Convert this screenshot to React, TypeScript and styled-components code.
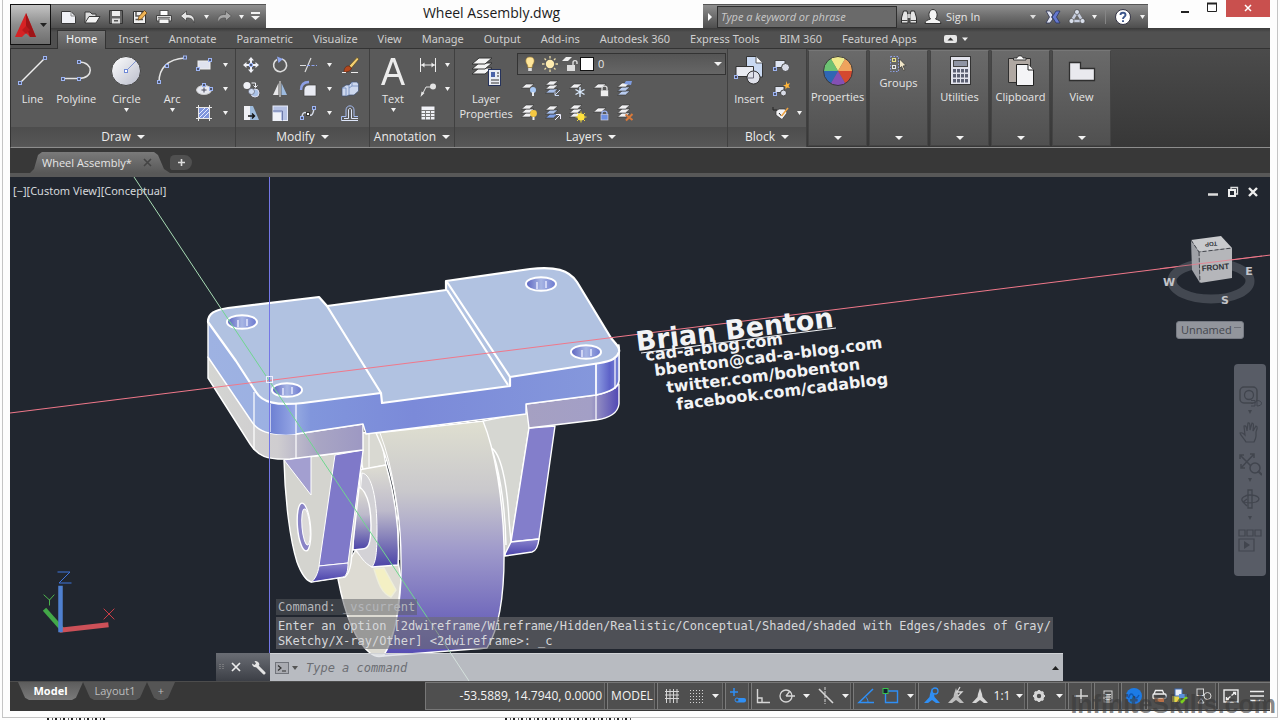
import React from 'react';
import styled, { createGlobalStyle, css } from 'styled-components';

const UI = '"Open Sans", "Noto Sans", "Liberation Sans", sans-serif';
const MONO = '"DejaVu Sans Mono", "Liberation Mono", monospace';

const Global = createGlobalStyle`
  *, *::before, *::after { box-sizing: border-box; }
  html, body { margin: 0; padding: 0; background: #fdfdfd; }
  body { font-family: ${UI}; font-size: 11px; line-height: 16px; color: #e6e6e6; overflow: hidden; }
  button, input, select { font: inherit; color: inherit; margin: 0; padding: 0; border: 0; background: none; border-radius: 0; }
  svg { display: block; flex: none; }
`;

/* ---------- shared pieces ---------- */

const Desktop = styled.div`
  display: flex;
  flex-direction: column;
  height: 100vh;
  padding: 0 2px;
`;

const Frame = styled.div`
  flex: 1;
  min-height: 0;
  display: flex;
  flex-direction: column;
  padding: 0 7px 6px 7px;
  border: 1px solid #c4c4c4;
  border-top: 0;
`;

/* edge of the window lying behind this one */
const Behind = styled.div`
  display: flex;
  height: 2px;
  padding: 0 45px;
  gap: 398px;
`;

const Fringe = styled.span<{ $w: number }>`
  width: ${p => p.$w}px;
  background: repeating-linear-gradient(90deg, #222 0 2px, transparent 2px 5px, #555 5px 6px, transparent 6px 8px);
`;

const IconButton = styled.button<{ $w?: number; $h?: number }>`
  display: inline-flex;
  align-items: center;
  justify-content: center;
  width: ${p => p.$w ?? 24}px;
  height: ${p => p.$h ?? 24}px;
  flex: none;
`;

const Arrow = ({ w = 6, c = '#f2f2f2' }: { w?: number; c?: string }) => (
  <svg width={w} height={4} viewBox="0 0 8 4" preserveAspectRatio="none" aria-hidden="true">
    <path d="M0 0H8L4 4Z" fill={c} />
  </svg>
);

const Glyph = ({ s = 20, children }: { s?: number; children: React.ReactNode }) => (
  <svg width={s} height={s} viewBox={`0 0 ${s} ${s}`} fill="none" aria-hidden="true">{children}</svg>
);

const Grip = ({ x, y }: { x: number; y: number }) => (
  <rect x={x - 1.5} y={y - 1.5} width="3" height="3" fill="#4b5470" stroke="#9db4f2" />
);

/* ---------- title bar ---------- */

const TitleBar = styled.header`
  position: relative;
  display: flex;
  height: 28px;
  padding-left: 41px;
  flex: none;
`;

const AppButton = styled.button`
  position: absolute;
  left: 0;
  top: 4px;
  z-index: 2;
  display: flex;
  align-items: center;
  justify-content: center;
  gap: 2px;
  width: 41px;
  height: 41px;
  border: 1px solid #111;
  background: linear-gradient(#c4c4c4, #8e8e8e 50%, #6e6e6e);
`;

const BarStrip = styled.div`
  display: flex;
  align-items: center;
  align-self: flex-end;
  height: 24px;
  border-top: 1px solid #555;
  background: linear-gradient(#8f8f8f, #707070 45%, #4e4e4e);
`;

const QuickBar = styled(BarStrip)`
  padding: 0 4px 0 5px;
`;

const Title = styled.h1`
  flex: 1;
  margin: 0;
  padding-left: 14px;
  font-size: 14px;
  font-weight: 400;
  line-height: 26px;
  text-align: center;
  white-space: nowrap;
  color: #1b1b1b;
`;

const SearchBox = styled.input`
  width: 180px;
  height: 22px;
  padding: 0 3px;
  border: 1px solid #2f2f2f;
  background: #6a6a6a;
  font-style: italic;
  &::placeholder { color: #c9c9c9; opacity: 1; }
`;

const SignIn = styled.button`
  display: flex;
  align-items: center;
  gap: 4px;
  width: 109px;
  height: 22px;
  padding-left: 3px;
`;

const ArrowSlot = styled.span`
  width: 10px;
`;

const Rule = styled.span`
  width: 1px;
  height: 14px;
  margin: 0 4px 0 5px;
  background: #858585;
`;

const WinButtons = styled.div`
  display: flex;
  margin-left: 24px;
  button { height: 17px; }
  svg { margin-top: -3px; }
`;

const CloseButton = styled(IconButton)`
  background: #c9504e;
`;

/* ---------- ribbon ---------- */

const TabRow = styled.nav`
  display: flex;
  align-items: flex-end;
  gap: 4px;
  height: 21px;
  flex: none;
  padding-left: 47px;
  background: linear-gradient(#3a3a3a, #505050 4px);
  border-bottom: 1px solid #333;
`;

const RibbonTab = styled.button<{ $on?: boolean }>`
  height: 18px;
  padding: 0 8px 1px;
  line-height: 16px;
  font-family: "Noto Sans", sans-serif;
  white-space: nowrap;
  color: #cfcfcf;
  ${p => p.$on && css`
    height: 19px;
    color: #f4f4f4;
    background: linear-gradient(#757575, #5c5c5c);
    border: 1px solid #333;
    border-bottom: 0;
    padding: 0 8px 3px;
    margin-bottom: -1px;
  `}
`;

const Ribbon = styled.section`
  display: flex;
  height: 99px;
  flex: none;
  background: linear-gradient(#4b4b4b, #373737);
  border-bottom: 1px solid #8d8d8d;
  border-left: 1px solid #333;
`;

const Panel = styled.div<{ $w: number }>`
  display: flex;
  flex-direction: column;
  width: ${p => p.$w}px;
  flex: none;
  background: #5a5a5a;
  border-right: 1px solid #404040;
`;

const PanelBody = styled.div`
  display: flex;
  flex: 1;
  min-height: 0;
  padding-top: 4px;
`;

const PanelTitle = styled.button`
  display: flex;
  align-items: center;
  justify-content: center;
  gap: 6px;
  height: 19px;
  margin-bottom: 1px;
  font-size: 12px;
  color: #ececec;
  background: linear-gradient(#4d4d4d, #565656);
`;

const BigTool = styled.button<{ $w: number }>`
  display: flex;
  flex-direction: column;
  align-items: center;
  width: ${p => p.$w}px;
  height: 72px;
  padding-top: 2px;
  line-height: 15px;
  white-space: nowrap;
  > svg:first-child { margin-bottom: 4px; }
  > svg:last-child:not(:first-child) { margin-top: 2px; }
`;

const ToolGrid = styled.div<{ $cols: string }>`
  display: grid;
  grid-template-columns: ${p => p.$cols};
  grid-auto-rows: 24px;
  align-content: start;
`;

const Split = styled.div`
  display: flex;
  align-items: center;
  gap: 5px;
`;

const LayerArea = styled.div`
  flex: 1;
`;

const LayerCombo = styled.div`
  display: flex;
  align-items: center;
  height: 22px;
  width: 209px;
  margin-bottom: 2px;
  padding: 0 3px 0 2px;
  border: 1px solid #333;
  background: linear-gradient(#555, #666);
`;

const PlainSelect = styled.select`
  flex: 1;
  appearance: none;
  min-width: 0;
  padding-left: 4px;
`;

const Swatch = styled.span`
  width: 14px;
  height: 14px;
  background: #fff;
  border: 1px solid #111;
`;

const SmallPanel = styled.button<{ $tight?: boolean }>`
  display: flex;
  flex-direction: column;
  align-items: center;
  width: 59px;
  height: 96px;
  margin: 1px 1px 0 1px;
  padding: 4px 0 5px;
  border: 1px solid #444;
  border-top-color: #777;
  background: linear-gradient(#6a6a6a, #505050);
  white-space: nowrap;
  > svg:last-child { margin-top: auto; }
  > span { margin-top: 2px; }
`;

/* ---------- file tabs ---------- */

const FileStrip = styled.div`
  display: flex;
  align-items: flex-end;
  height: 29px;
  flex: none;
  padding-left: 20px;
  background: #383838;
  border-bottom: 4px solid #585858;
`;

const FileTab = styled.button`
  display: flex;
  align-items: center;
  gap: 11px;
  width: 140px;
  height: 21px;
  padding-left: 12px;
  background: linear-gradient(#7a7a7a, #585858);
  clip-path: polygon(0 100%, 4px 17px, 8px 3px, 12px 0, 124px 0, 128px 3px, 134px 17px, 100% 100%);
  white-space: nowrap;
`;

const AddTab = styled.button`
  display: flex;
  align-items: center;
  justify-content: center;
  width: 22px;
  height: 15px;
  margin: 0 0 3px 0;
  border-radius: 5px 8px 8px 3px;
  background: #505050;
`;

/* ---------- drawing area ---------- */

const Canvas = styled.main`
  position: relative;
  flex: 1;
  min-height: 0;
  overflow: hidden;
  background: #21262f;
`;

const Scene = styled.svg`
  position: absolute;
  inset: 0;
  width: 100%;
  height: 100%;
`;

const ViewLabels = styled.div`
  position: absolute;
  left: 3px;
  top: 6px;
  display: flex;
  font-family: "Noto Sans", sans-serif;
  color: #d5d8dc;
`;

const DocButtons = styled.div`
  position: absolute;
  right: 7px;
  top: 7px;
  display: flex;
`;

const UcsSelect = styled.select`
  position: absolute;
  right: 26px;
  top: 144px;
  width: 68px;
  height: 18px;
  padding: 0 4px;
  appearance: none;
  border: 1px solid #777b84;
  border-radius: 3px;
  background: #92959c;
  color: #44474e;
`;

const UcsDash = styled.span`
  position: absolute;
  right: 29px;
  top: 150px;
  width: 7px;
  height: 1px;
  background: #6d7078;
`;

const NavBar = styled.div`
  position: absolute;
  right: 4px;
  top: 187px;
  width: 32px;
  height: 212px;
  padding: 18px 0 4px;
  display: flex;
  flex-direction: column;
  align-items: center;
  border-radius: 4px;
  background: #585c66;
`;

const CommandArea = styled.div`
  position: absolute;
  left: 206px;
  right: 207px;
  bottom: 0;
  font-family: ${MONO};
  font-size: 12px;
  line-height: 15px;
`;

const History = styled.div<{ $dim?: boolean }>`
  width: fit-content;
  margin: 0 0 2px 60px;
  padding: ${p => (p.$dim ? '1px 2px 0' : '2px 2px 0')};
  white-space: pre;
  color: ${p => (p.$dim ? '#b4b6ba' : '#d6d7da')};
  background: ${p => (p.$dim ? 'rgba(90, 92, 96, .5)' : 'rgba(108, 109, 113, .6)')};
`;

const CommandBar = styled.div`
  display: flex;
  height: 28px;
  margin-top: 4px;
`;

const CommandGrip = styled.div`
  display: flex;
  align-items: center;
  width: 54px;
  padding-left: 3px;
  background: linear-gradient(#6a6d74, #3c3f46);
`;

const CommandField = styled.div`
  flex: 1;
  display: flex;
  align-items: center;
  padding: 0 4px 0 5px;
  background: rgba(223, 225, 230, .8);
  border-top: 1px solid #d0d2d6;
`;

const CommandInput = styled.input`
  flex: 1;
  min-width: 0;
  height: 20px;
  padding-left: 5px;
  font-style: italic;
  color: #222;
  &::placeholder { color: #6c6e73; opacity: 1; }
`;

/* ---------- status bar ---------- */

const Bottom = styled.footer`
  display: flex;
  align-items: flex-start;
  height: 30px;
  flex: none;
  padding-left: 8px;
  background: #373737;
  border-top: 1px solid #4c4c4c;
`;

const LayoutTab = styled.button<{ $w: number; $on?: boolean }>`
  width: ${p => p.$w}px;
  height: 18px;
  line-height: 16px;
  color: ${p => (p.$on ? '#fff' : '#bdbdbd')};
  font-weight: ${p => (p.$on ? 700 : 400)};
  background: ${p => (p.$on ? 'linear-gradient(#5c5c5c, #7a7a7a)' : '#555')};
  clip-path: polygon(0 0, 100% 0, calc(100% - 7px) 88%, calc(100% - 11px) 100%, 11px 100%, 7px 88%);
`;

const Status = styled.div`
  display: flex;
  align-items: center;
  margin: 0 0 0 auto;
  height: 28px;
  font-size: 12px;
  color: #f3f3f3;
  background: #4f4f4f;
  border: 1px solid #777;
  border-right: 0;
`;

const Coords = styled.output`
  width: 181px;
  padding-right: 5px;
  text-align: right;
`;

const StatusGroup = styled.div`
  display: flex;
  align-items: center;
  height: 26px;
  border-left: 1px solid #7b7b7b;
  box-shadow: -2px 0 #444, -3px 0 #6d6d6d;
  > :first-child { margin-left: -1px; }
`;

const Watermark = styled.div`
  position: absolute;
  right: 4px;
  bottom: 2px;
  z-index: 5;
  font: 700 25px/28px "Liberation Sans", sans-serif;
  color: rgba(58, 58, 58, .62);
  pointer-events: none;
`;

/* ---------- icons ---------- */

const W = '#f0f1f6';
const Q = {
  file: <Glyph><path d="M3.500 4.500H13L17.500 9V16.500H3.500Z" fill={W} stroke="#3a3a3a" /><path d="M13 4.500V9H17.500" stroke="#888" /></Glyph>,
  open: <Glyph><path d="M3 16V5H8L10 7H14V9" fill="#ddd" stroke="#3a3a3a" /><path d="M3 16L7 9.500H18L14 16Z" fill="#f4f4f4" stroke="#3a3a3a" /></Glyph>,
  save: <Glyph><path d="M3.500 3.500H16.500V16.500H3.500Z" fill="#666" stroke="#333" /><rect x="6" y="4" width="8" height="5" fill="#eee" /><rect x="6" y="11.500" width="8" height="5" fill="#ddd" /><rect x="8" y="13" width="4" height="1.500" fill="#555" /></Glyph>,
  saveAs: <Glyph><path d="M3.500 4.500H15.500V16.500H3.500Z" fill="#f0f0f0" stroke="#333" /><path d="M6 5V9H12V5M5.500 12.500H13" stroke="#555" strokeWidth="1.500" /><path d="M8 13L9 9.500L14.500 3.500L17 6L11.500 12Z" fill="#f0b455" stroke="#6b4415" strokeWidth=".8" /></Glyph>,
  print: <Glyph><rect x="6" y="3.500" width="8" height="6" fill="#fff" stroke="#555" /><path d="M2.500 8.500H17.500V14H2.500Z" fill="#dcdcdc" stroke="#444" /><rect x="5" y="12" width="10" height="4.500" fill="#f5f5f5" stroke="#555" /><path d="M4 10.500H16" stroke="#777" /></Glyph>,
  undo: <Glyph><path d="M2.500 9L8.500 4V7.500C14 7 17.500 10 16 16C15 12 12.500 10.800 8.500 11V14Z" fill="#e4e4e4" stroke="#444" strokeWidth=".8" /></Glyph>,
  redo: <Glyph><path d="M17.500 9L11.500 4V7.500C6 7 2.500 10 4 16C5 12 7.500 10.800 11.500 11V14Z" fill="#a8a8a8" stroke="#555" strokeWidth=".8" /></Glyph>,
  more: <svg width="9" height="9" viewBox="0 0 9 9"><path d="M0 0H9V2H0ZM0 4H9L4.500 8Z" fill="#f4f4f4" /></svg>,
  binoc: <Glyph><path d="M3 9L4.500 4H8L9 8V16H2.500V11ZM17 9L15.500 4H12L11 8V16H17.500V11Z" fill="#e5e5e5" stroke="#2e2e2e" /><rect x="8.500" y="7" width="3" height="4" fill="#ccc" /><path d="M3 13.500H8.500M11.500 13.500H17" stroke="#444" /></Glyph>,
  user: <Glyph s={18}><path d="M1 15.500C1 12.500 4 12 6.500 11C3.500 8 5 1.500 9 1.500S14.500 8 11.500 11C14 12 17 12.500 17 15.500Z" fill="#f4f4f4" stroke="#333" /></Glyph>,
  exch: <Glyph><path d="M3 4H7L10 8L8.500 10L10 12L7 16H3L6.500 10Z" fill="#dfe3f2" stroke="#2a3050" strokeWidth=".8" /><path d="M17 4H13L10.500 8L9 10L10.500 12L13 16H17L13.500 10Z" fill="#6478d0" stroke="#2a3560" strokeWidth=".8" /></Glyph>,
  a360: <Glyph><path d="M10 5L4.500 14H15.500Z" stroke="#c6cdde" strokeWidth="2.600" /><circle cx="10" cy="5" r="2.500" fill="#d8deea" stroke="#333" strokeWidth=".6" /><circle cx="4.500" cy="14" r="2.500" fill="#d8deea" stroke="#333" strokeWidth=".6" /><circle cx="15.500" cy="14" r="2.500" fill="#d8deea" stroke="#333" strokeWidth=".6" /></Glyph>,
  help: <Glyph><circle cx="10" cy="10" r="7.500" fill="#fff" stroke="#334" /><path d="M7.500 8C7.500 5 12.500 5 12.500 8C12.500 9.800 10 9.800 10 12M10 13.200V15" stroke="#3c568c" strokeWidth="1.900" /></Glyph>,
};

const D = {
  line: <Glyph s={32}><path d="M4 28L29 3" stroke="#eee" strokeWidth="1.500" /><Grip x={4} y={28} /><Grip x={29} y={3} /></Glyph>,
  pline: <Glyph s={32}><path d="M3 23.500H19C34 23.500 34 7 19 7" stroke="#e4e4e4" strokeWidth="1.500" /><Grip x={3} y={24} /><Grip x={19} y={24} /><Grip x={19} y={7} /></Glyph>,
  circle: (
    <Glyph s={32}>
      <defs><linearGradient id="disc" x1="0" y1="0" x2="1" y2="1"><stop offset="0" stopColor="#fff" /><stop offset="1" stopColor="#b9bccb" /></linearGradient></defs>
      <circle cx="16" cy="16" r="14.500" fill="url(#disc)" stroke="#444" /><path d="M16 16L26 6" stroke="#7f93d0" /><rect x="14.500" y="14.500" width="3" height="3" fill="#fff" stroke="#6f8ad8" />
    </Glyph>
  ),
  arc: <Glyph s={32}><path d="M3 27C3 13 12 4 29 3" stroke="#e4e4e4" strokeWidth="1.500" /><Grip x={3} y={27} /><Grip x={11} y={11} /><Grip x={29} y={2.5} /></Glyph>,
  rect: <Glyph><rect x="4" y="6" width="12" height="8" fill="#dfe2ee" stroke="#eee" /><Grip x={4} y={14} /><Grip x={16} y={5} /></Glyph>,
  ellipse: <Glyph><ellipse cx="10" cy="11" rx="7.500" ry="4.500" fill="#e6e8f0" stroke="#ccc" /><Grip x={10} y={6} /><Grip x={17} y={10} /><path d="M10 8.500V13.500M7.500 11H12.500" stroke="#445" /></Glyph>,
  hatch: <Glyph><rect x="5" y="5" width="10" height="10" fill="#7f95dc" /><path d="M5 11L11 5M5 15L15 5M9 15L15 9" stroke="#e6ecff" strokeWidth="1" /><path d="M4.500 2V18M15.500 2V18M2 4.500H18M2 15.500H18" stroke="#e8e8e8" /></Glyph>,
  move: <Glyph><path d="M10 2L13 5.500H11V8H9V5.500H7ZM10 18L13 14.500H11V12H9V14.500H7ZM2 10L5.500 7V9H8V11H5.500V13ZM18 10L14.500 7V9H12V11H14.500V13Z" fill={W} /><Grip x={10} y={10} /></Glyph>,
  rotate: <Glyph><path d="M7 4.500A6.500 6.500 0 1 0 12 4" stroke="#dedede" strokeWidth="1.600" /><path d="M7 1.500L13 4L8.500 8Z" fill="#8ea6ee" /></Glyph>,
  trim: <Glyph><path d="M2 10.500H8M13 3L7 17" stroke="#dcdcdc" strokeWidth="1.200" /><path d="M9 10.500H19" stroke="#8fa4f0" strokeDasharray="3 1.500" /></Glyph>,
  brush: <Glyph><path d="M9 11L17 2.500L19 4L11.500 13Z" fill="#f3cf70" stroke="#5c471c" strokeWidth=".7" /><path d="M4 17C4 13 6 10.500 9 11L11.500 13C11 16 8 17 4 17Z" fill="#b3481e" stroke="#5c2410" strokeWidth=".6" /><path d="M2 17.500H6M11 17.500H18" stroke="#eee" /></Glyph>,
  copy: <Glyph><circle cx="6" cy="6.500" r="3.600" fill={W} /><circle cx="14" cy="14" r="4" fill="#a9c2e8" stroke="#dde" /><circle cx="10.500" cy="12.500" r="3" fill="#cfdcf2" stroke="#556" strokeWidth=".6" /><path d="M10.500 4H14.500V8M12.500 6.500L14.500 8.500L16.500 6.500" stroke={W} /></Glyph>,
  mirror: <Glyph><path d="M8.500 4V16H3Z" fill="#e8e8ea" /><path d="M11.500 4V16H17Z" fill="#9dbbe0" /><path d="M10 2V18" stroke="#eee" /></Glyph>,
  fillet: <Glyph><path d="M6 17V11C6 8 8 6 11 6H18V17Z" fill="#e8eaf2" stroke="#444" strokeWidth=".7" /><path d="M3 11C3 6 6 3 11 3" stroke="#8d9fe4" strokeWidth="2.400" /></Glyph>,
  erase: <Glyph><path d="M2 9L6 6H9L12 3H17L18.500 5V12L14 16H9L7 17H2Z" fill="#cdd8ee" stroke="#3f5274" strokeWidth=".7" /><path d="M9 6V16M9 9L12 7H18M12 7V3M2 9H6V17" stroke="#6f8bbd" strokeWidth=".8" /></Glyph>,
  stretch: <Glyph><path d="M3 3H9V17H3Z" fill={W} /><path d="M9 3H12L18 17H9Z" fill="#9dbbdc" /><path d="M7 13H13M11 10.500L13.500 13L11 15.500" stroke="#111" strokeWidth="1.400" /></Glyph>,
  scale: <Glyph><rect x="3" y="3" width="14.500" height="14.500" fill="#b6c2e4" stroke="#e8ecf8" /><path d="M3 8H12.500V17.500" stroke="#6d79a8" /><rect x="3" y="9.500" width="8" height="8" fill="#f2f3f8" /></Glyph>,
  array: <Glyph><path d="M4 15C4 8 8 9 10 11S15 14 16 5" stroke="#d6dbe8" strokeWidth="1.500" /><Grip x={4} y={15} /><rect x="8.500" y="9.500" width="3" height="3" fill="#fff" stroke="#333" /><Grip x={16} y={5} /></Glyph>,
  offset: <Glyph><path d="M1.500 17.500V13.500H6V7C6 1.500 14 1.500 14 7V13.500H18" stroke="#a6bcf0" /><path d="M1.500 17.500H18M4 15.500H8.500V7C8.500 5 11.500 5 11.500 7V15.500H18" stroke="#dde5f8" /></Glyph>,
  dim: <Glyph><path d="M2.500 3V17M17.500 3V17M3 10H17" stroke="#eee" /><path d="M6.500 7.500L3.500 10L6.500 12.500ZM13.500 7.500L16.500 10L13.500 12.500Z" fill="#eee" /></Glyph>,
  leader: <Glyph><path d="M4 16L8 8H13" stroke="#e4e4e4" /><path d="M2.500 18L3.500 12.500L6.500 14Z" fill="#e4e4e4" /><circle cx="15" cy="7.500" r="3" fill="#e4e4e4" /></Glyph>,
  table: <Glyph><rect x="3" y="3" width="14" height="14" fill={W} stroke="#555" /><path d="M3 7.500H17M3 10.500H17M3 13.500H17M7.500 7V17M12.500 7V17" stroke="#777" /></Glyph>,
  text: <svg width="32" height="32" viewBox="0 0 32 32" aria-hidden="true"><path d="M4 30L14 3H18L28 30H24.500L21.500 22H10.500L7.500 30ZM11.500 19H20.500L16 6.500Z" fill="#ececec" /></svg>,
  layerProps: (
    <Glyph s={32}>
      {[17, 12, 7].map(y => <path key={y} d={`M2 ${y + 2}L9 ${y - 4}H22L15 ${y + 2}Z`} fill="#f4f4f4" stroke="#333" />)}
      <rect x="18.500" y="14.500" width="12" height="16" fill="#e9ecf4" stroke="#26335c" /><rect x="21" y="17" width="4" height="5" fill="#4a62a8" /><path d="M27 18H29M27 21H29M21 25H29M21 28H29" stroke="#333" />
    </Glyph>
  ),
  insert: <Glyph s={32}><path d="M13.500 1.500H23L29.500 8V22H13.500Z" fill="#c9d9f2" stroke="#333" /><path d="M23 1.500V8H29.500" fill="#fff" stroke="#555" /><path d="M3 11.500H20.500V21.500H3Z" fill="#e9ebf2" stroke="#333" /><circle cx="20.500" cy="22.500" r="6.500" fill="#dfe1ea" stroke="#333" /><path d="M20.500 16V23H14" stroke="#667" /><rect x="1.500" y="20.500" width="3" height="3" fill="#445" stroke="#9db4f2" /></Glyph>,
  blockNew: <Glyph><path d="M4 5.500H14V12.500H4Z" fill="#dfe5f2" stroke="#444" /><circle cx="14.500" cy="12.500" r="4" fill="#d8dbe6" stroke="#444" /><Grip x={4} y={14} /></Glyph>,
  blockEdit: <Glyph><path d="M4 7.500H13V13.500H4Z" fill="#dfe5f2" stroke="#444" /><circle cx="12.500" cy="14" r="3" fill="#d8dbe6" stroke="#444" /><path d="M15 2L16.500 5L19 4L17.500 7L19 9L16 8.500L14.500 10.500V7.500L12 6.500L15 5.500Z" fill="#ffb53a" /><Grip x={4} y={15} /></Glyph>,
  blockAttr: <Glyph><path d="M5 8L8 6H14L16 10L11 16.500L5 12Z" fill="#f2f2f4" stroke="#333" strokeWidth=".7" /><path d="M2 4V7H6M8 10L10.500 13" stroke="#222" /><path d="M10.500 13L17 5" stroke="#eda240" strokeWidth="1.600" /></Glyph>,
  bulb: <Glyph><path d="M10 3C5 3 5 8 7.500 11L8 13.500H12L12.500 11C15 8 15 3 10 3Z" fill="#ffe69a" stroke="#a88436" strokeWidth=".6" /><rect x="8.200" y="14" width="3.600" height="3" fill="#ddd" /></Glyph>,
  sun: <Glyph><circle cx="10" cy="10" r="4.200" fill="#ffedb0" /><path d="M10 2V4.500M10 15.500V18M2 10H4.500M15.500 10H18M4.500 4.500L6 6M14 14L15.500 15.500M4.500 15.500L6 14M14 6L15.500 4.500" stroke="#e8d9a4" strokeWidth="1.300" /></Glyph>,
  unlock: <Glyph><path d="M2 7L6 3H12L8 7Z" fill="#eee" /><rect x="7" y="11" width="8" height="6" fill="#ddd" /><path d="M13 11V8.500C13 6 17 6 17 8.500V10" stroke="#ddd" strokeWidth="1.400" /></Glyph>,
};

const Sheet = ({ y, c = '#f0f0f2' }: { y: number; c?: string }) => <path d={`M2.500 ${y + 2}L7 ${y - 2}H15L10.500 ${y + 2}Z`} fill={c} stroke="#333" strokeWidth=".6" />;
const L = [
  <Glyph key="0"><Sheet y={7} /><circle cx="14" cy="11" r="3" fill="#a8c8f4" /><path d="M14 13V17" stroke="#e4e8f0" strokeWidth="2" /></Glyph>,
  <Glyph key="1"><Sheet y={12} c="#a8bfe8" /><Sheet y={8} /><Sheet y={4} /><path d="M17 11L12 16M12 12.500V16.500H16" stroke="#c8d6f0" /></Glyph>,
  <Glyph key="2"><Sheet y={7} /><path d="M13 8V18M8.500 10.500L17.500 15.500M17.500 10.500L8.500 15.500" stroke="#dcecff" strokeWidth="1.400" /></Glyph>,
  <Glyph key="3"><Sheet y={7} /><rect x="9.500" y="11" width="8" height="6.500" fill="#eee" stroke="#444" strokeWidth=".5" /><path d="M11 11V9C11 6.500 16 6.500 16 9V11" stroke="#ddd" strokeWidth="1.300" /></Glyph>,
  <Glyph key="4"><Sheet y={14} c="#b9ccf0" /><Sheet y={10} c="#b9ccf0" /><Sheet y={6} /><path d="M9 5L11 2H17L16 6" fill="#7f9ce0" /></Glyph>,
  <Glyph key="5"><Sheet y={12} /><Sheet y={8} /><Sheet y={4} /><circle cx="14.500" cy="10.500" r="3.400" fill="#f5c842" /><path d="M14.500 14V17" stroke="#eee" strokeWidth="2" /></Glyph>,
  <Glyph key="6"><Sheet y={13} c="#7fa0e6" /><Sheet y={9} c="#a8bfe8" /><Sheet y={5} /><path d="M12 17L17 12M13 11.500H17.500V16" stroke="#eef" /></Glyph>,
  <Glyph key="7"><Sheet y={12} /><Sheet y={8} /><Sheet y={4} /><circle cx="14" cy="14" r="3.600" fill="#ffe23c" /><path d="M14 8.500V19.500M8.500 14H19.500M10 10L18 18M18 10L10 18" stroke="#ffe23c" strokeWidth=".9" /></Glyph>,
  <Glyph key="8"><Sheet y={7} /><rect x="10" y="11.500" width="7" height="5.500" fill="#6d8fe0" stroke="#dde" strokeWidth=".6" /><path d="M11 11.500V10C11 7.500 16 7.500 16 10V11" stroke="#9db4f2" strokeWidth="1.300" /></Glyph>,
  <Glyph key="9"><Sheet y={12} /><Sheet y={8} /><Sheet y={4} /><path d="M10.500 11.500L17.500 17M17.500 11L11 17.500" stroke="#d8793a" strokeWidth="2" /></Glyph>,
];

const wheelColors = ['#efe98c', '#efa35c', '#d4492f', '#8450b4', '#2f67b4', '#6cc272'];
const ColorWheel = () => (
  <Glyph s={32}>
    {wheelColors.map((c, i) => {
      const p = (k: number) => {
        const a = ((k * 60 - 30) * Math.PI) / 180;
        return `${(16 + 14.5 * Math.sin(a)).toFixed(2)} ${(16 - 14.5 * Math.cos(a)).toFixed(2)}`;
      };
      return <path key={c} d={`M16 16L${p(i)}A14.500 14.500 0 0 1 ${p(i + 1)}Z`} fill={c} />;
    })}
    <circle cx="16" cy="16" r="14.500" stroke="#3a3a3a" />
  </Glyph>
);
const GroupIcon = () => <Glyph s={18}><rect x="2.500" y="3.500" width="3" height="3" stroke="#e8e08a" /><rect x="2.500" y="10.500" width="3" height="3" stroke="#e8e8e8" /><path d="M.5 1.500H8.500V16.500H.5Z" stroke="#8da0e8" strokeDasharray="1.500 1.500" /><path d="M9.500 4L16 10.500L13 11L15 15L13.500 15.500L11.500 11.500L9.500 13.500Z" fill="#f1e6c8" stroke="#333" strokeWidth=".7" /></Glyph>;
const CalcIcon = () => (
  <Glyph s={32}><rect x="6.500" y="1.500" width="20" height="28" fill="#e2e3ec" stroke="#333" /><rect x="9.500" y="5.500" width="14" height="6" fill="#8f94a3" stroke="#444" />
    {[14, 19, 24].map(y => [9, 13, 17, 21].map(x => <rect key={x + '-' + y} x={x} y={y} width="3" height="3.500" fill="#5c6072" />))}
  </Glyph>
);
const ClipIcon = () => <Glyph s={32}><path d="M3.500 3.500H25.500V27.500H3.500Z" fill="#b0a8a2" stroke="#2f2f2f" /><path d="M8.500 5V3H12C12 0 18 0 18 3H21V5Z" fill="#fff" stroke="#333" /><path d="M11.500 9.500H23L28.500 15V30.500H11.500Z" fill="#f4f4f6" stroke="#222" /><path d="M23 9.500V15H28.500" fill="#fff" stroke="#222" /></Glyph>;
const ViewIcon = () => <Glyph s={32}><path d="M3.500 7.500H14.500V13.500H28.500V25.500H3.500Z" fill="#e9e9ee" stroke="#2f2f2f" strokeWidth="1.300" /></Glyph>;

const B = '#2f8ff5';
const G = '#d6d6d6';
const Person = ({ c }: { c: string }) => <path d="M10 2L12 8L12.500 11L18 17H14L10 14L6 17H2L7.500 11L8 8Z" fill={c} />;
const S: Record<string, React.ReactNode> = {
  grid: <Glyph><path d="M4.500 3V17M8 3V17M11.500 3V17M15 3V17M3 5.500H17M3 9H17M3 12.500H17" stroke={G} /></Glyph>,
  snap: <Glyph><path d="M3 4.500H17M3 7.500H17M3 10.500H17M3 13.500H17M3 16.500H17" stroke={G} strokeDasharray="1 2" /></Glyph>,
  infer: <Glyph><path d="M6 2V10M2 6H10" stroke={B} strokeWidth="1.500" /><rect x="8" y="12" width="10" height="4.500" rx="2" fill={B} /><circle cx="9" cy="14" r="2" fill="#4f4f4f" stroke={B} /></Glyph>,
  ortho: <Glyph><path d="M4.500 3V16.500H17M4.500 12H9V16" stroke={G} strokeWidth="1.400" /></Glyph>,
  polar: <Glyph><circle cx="9" cy="10" r="6" stroke={G} strokeWidth="1.300" /><path d="M9 10H18M9 10L13 5" stroke={G} strokeWidth="1.300" /></Glyph>,
  iso: <Glyph><path d="M3 3L17 17" stroke={G} strokeWidth="1.600" /><path d="M9 1V18" stroke={G} strokeDasharray="3 1" /></Glyph>,
  angle: <Glyph><path d="M17 3L3 16.500H18" stroke={B} strokeWidth="1.500" /><path d="M9 10C11 12 12 14 12 16" stroke={B} /></Glyph>,
  osnap: <Glyph><path d="M5 5H16.500V16.500H4.500V6" stroke={B} strokeWidth="1.400" /><rect x="2" y="2.500" width="5" height="5" fill="#123" stroke="#39c24a" /></Glyph>,
  p1: <Glyph><Person c={B} /><circle cx="13" cy="5" r="3" fill="#4f4f4f" stroke={B} strokeWidth="1.300" /></Glyph>,
  p2: <Glyph><Person c="#bdbdbd" /><path d="M14 1L11 6H16L12 10" stroke="#d8d8d8" strokeWidth="1.300" /></Glyph>,
  p3: <Glyph><Person c={G} /></Glyph>,
  gear: <Glyph><circle cx="10" cy="10" r="3.700" stroke={G} strokeWidth="3.400" /><path d="M10 4V16M4 10H16M5.800 5.800L14.200 14.200M14.200 5.800L5.800 14.200" stroke={G} strokeWidth="2.200" /><circle cx="10" cy="10" r="2.200" fill="#4f4f4f" /></Glyph>,
  plus: <Glyph><path d="M10 3V17M3 10H17" stroke={G} strokeWidth="1.500" /></Glyph>,
  calc: <Glyph><rect x="6" y="5" width="8" height="11" stroke={G} /><path d="M7 8.500H13M7 11H13M7 13.500H13M9 8V15M11 8V15" stroke={G} /></Glyph>,
  ball: <Glyph><circle cx="10" cy="10" r="8" fill="#1c7be6" /><path d="M4.500 12C6 7 8 7 9.500 10S13 13 15 9" stroke="#0f58b4" strokeWidth="1.500" /></Glyph>,
  plot: <Glyph><path d="M5 8L6.500 4.500H13.500L15 8" stroke="#eee" strokeWidth="1.300" /><rect x="4" y="8" width="13" height="4.500" rx="1" fill="#4f4f4f" stroke="#eee" strokeWidth="1.300" /><rect x="6" y="12.500" width="9" height="3.500" fill="#b97048" /></Glyph>,
  share: <Glyph><rect x="2" y="10" width="7" height="6" fill="#e8d44c" /><rect x="5" y="3" width="7" height="7" fill="#e9eef8" stroke="#3f6cb8" /><path d="M9 8H17V12H9Z" fill="#5a8fdc" /><path d="M9 13L12 16L17 11" stroke="#7bd01e" strokeWidth="2.500" /></Glyph>,
  shapes: <Glyph><rect x="3" y="3" width="6.500" height="6.500" stroke={G} /><circle cx="13.500" cy="10" r="3.500" stroke={G} /><path d="M7 12.500L10 17H4Z" stroke={G} /></Glyph>,
  full: <Glyph><rect x="3" y="4" width="14" height="12" stroke="#eee" strokeWidth="1.400" /><path d="M10.500 9.500L14 6.500M12 6.500H14.500V9M9.500 10.500L6 13.500M8 13.500H5.500V11" stroke="#eee" strokeWidth="1.400" /></Glyph>,
  menu: <Glyph><path d="M3 5.500H17M3 10H17M3 14.500H17" stroke="#eee" strokeWidth="1.600" /></Glyph>,
};

/* ---------- scene ---------- */

const Hole = ({ x, y }: { x: number; y: number }) => (
  <g>
    <ellipse cx={x} cy={y} rx="15" ry="6.800" fill="url(#hole)" stroke="#fff" strokeWidth="2" />
    <path d={`M${x - 4} ${y - 2}V${y + 5}M${x + 5} ${y - 3}V${y + 4}`} stroke="#e8ecff" />
  </g>
);

const Model = () => (
  <g strokeLinejoin="round" strokeWidth="1.400" stroke="#fff">
    <path d="M483 421L528 412L529 428L511 543L504 556Z" fill="#d6d7d2" />
    <path d="M529 428L555 426L539 539L511 542Z" fill="#837ecb" />
    <path d="M511 542L539 539C538 547 536 551 532 552L505 556V545Z" fill="url(#foot)" />
    <path d="M486 432L491 448C500 452 507 480 509 520L511 542L504 556L499 480Z" fill="#d2d3d0" />
    <path d="M491 447C498 465 505 500 506 545" fill="none" />
    <path d="M357 548L338 579C344 610 354 640 370 653C375 657 381 657 385 655L396 625L401 580L398 560Z" fill="#dddbd3" />
    <path d="M374 569C378 582 381 593 391 597L396 590L384 568Z" fill="#f4f0c4" stroke="#eeeeda" />
    <path d="M357 433L380 432L386 465L363 470Z" fill="#d9d9d2" />
    <path d="M369 433V467" fill="none" strokeWidth="1" />
    <path d="M358 470L386 465C396 500 400 530 398 565L372 567L355 550Z" fill="url(#rim)" />
    <path d="M362 473C372 474 377 500 377 530C377 552 376 562 372 567C364 563 360 556 355 548Z" fill="#d3d2d6" strokeWidth="1" />
    <path d="M355 486C366 486 371 505 371 525C371 545 368 549 362 549L353 550Z" fill="url(#rim)" />
    <path d="M376 433L483 421C495 450 503 500 504 545C505 600 497 632 487 648L383 656C395 640 402 600 401 560C401 505 389 460 376 433Z" fill="url(#tread)" />
    <path d="M380 433C394 470 399 510 399 560" fill="none" strokeWidth="1" />
    <path d="M284 460C285 500 290 540 297 562C301 573 305 580 311 582L345 577C349 574 350 569 351 563L363 450Z" fill="#d4d4cf" />
    <path d="M284 460L311 495V456Z" fill="#a39fd0" strokeWidth="1" />
    <path d="M335 455L363 450L348 563L319 566Z" fill="#7f79c9" strokeWidth="1" />
    <path d="M319 566L348 563C348 570 347 576 343 577L311 582C315 580 318 573 319 566Z" fill="url(#foot)" strokeWidth="1" />
    <ellipse cx="304" cy="527" rx="6.500" ry="24" fill="#8a84c6" transform="rotate(-5 304 527)" />
    <ellipse cx="306" cy="527" rx="4" ry="18" fill="#dcdad8" strokeWidth="1" transform="rotate(-5 306 527)" />

    <path d="M208 357V378L250 444C258 456 266 460 290 459L363 450V424L296 434L256 422Z" fill="url(#lower)" />
    <path d="M526 404L529 428L596 420C610 418 618 412 619 404V384L596 395Z" fill="url(#lowerR)" />
    <path d="M208 320V357L252 422C258 431 268 436 296 434L363 424L366 434L526 414V404L596 395C610 392 619 388 619 380V347L510 360L300 380Z" fill="url(#side)" />
    <path d="M596 350V395C610 392 619 388 619 380V345Z" fill="url(#cornerR)" />
    <path d="M270 395V433C280 435 288 435 296 434V400Z" fill="url(#cornerL)" stroke="none" />
    <g strokeWidth="2.200">
      <path d="M208 322C208 313 215 310 228 308L319 297L327 306L446 290V281L530 269C555 266 569 270 577 282L611 338C617 345 620 348 619 352C617 358 612 361 600 363L510 377V386L382 403L381 393L303 403C275 406 262 402 256 392L236 361Z" fill="#b1c2e1" />
      <path d="M327 306L381 393M447 282L510 377M447 290L508 385" fill="none" />
    </g>
    <path d="M254 392V450M296 404V459M270 404V432M596 364V420M615 357V389" fill="none" opacity=".85" />
    <Hole x={242} y={322} /><Hole x={541} y={284} /><Hole x={287} y={390} /><Hole x={586} y={352} />
  </g>
);

const Stops = ({ id, dir = 'v', stops }: { id: string; dir?: 'v' | 'h'; stops: [number, string][] }) => (
  <linearGradient id={id} x1="0" y1="0" x2={dir === 'h' ? 1 : 0} y2={dir === 'v' ? 1 : 0}>
    {stops.map(([o, c]) => <stop key={o} offset={o} stopColor={c} />)}
  </linearGradient>
);

const SceneDrawing = () => (
  <Scene viewBox="10 177 1260 504" preserveAspectRatio="xMidYMid slice" role="img" aria-label="Wheel assembly model">
    <defs>
      <Stops id="tread" stops={[[0, '#dfdfd0'], [0.3, '#c9c8cc'], [0.55, '#9f9acb'], [1, '#564db3']]} />
      <Stops id="rim" stops={[[0, '#deddd2'], [0.45, '#bdbacb'], [1, '#4a43a8']]} />
      <Stops id="foot" stops={[[0, '#8a85cd'], [1, '#4a42ab']]} />
      <Stops id="hole" dir="h" stops={[[0, '#5c64c0'], [0.5, '#a8b6e4'], [1, '#6b78cf']]} />
      <Stops id="lower" dir="h" stops={[[0, '#d4d5d2'], [0.45, '#cfcdd0'], [0.7, '#a9a6c4'], [1, '#9d98c3']]} />
      <Stops id="lowerR" dir="h" stops={[[0, '#a5a0c2'], [0.7, '#a39fc6'], [1, '#5048b4']]} />
      <Stops id="side" dir="h" stops={[[0, '#9eb2e2'], [0.2, '#9bb0e2'], [0.25, '#8196dc'], [0.5, '#7b8ad9'], [1, '#8699dc']]} />
      <Stops id="cornerR" dir="h" stops={[[0, '#8f9fe2'], [0.6, '#5d62c8'], [1, '#7582d6']]} />
      <Stops id="cornerL" dir="h" stops={[[0, '#6c7fd2'], [1, '#98a9e6']]} />
    </defs>
    <Model />
    <path d="M-400 464.400L1700 201.200" stroke="#f0788a" strokeWidth="1" />
    <path d="M134 177L222 310M429 620L469 681" stroke="#a8dcb4" />
    <path d="M222 310L429 620" stroke="#6fd68f" />
    <path d="M269.500 177V681" stroke="#7477e6" />
    <rect x="266.500" y="376.500" width="6" height="6" fill="none" stroke="#eef" />

    <g fill="#f2f3f5" fontFamily='"DejaVu Sans", sans-serif' fontWeight="700">
      <text x="637" y="351" fontSize="27" transform="rotate(-7 637 351)">Brian Benton</text>
      <path d="M641 353L836 328" stroke="#f2f3f5" />
      <text x="646" y="361" fontSize="16" transform="rotate(-7 646 361)">cad-a-blog.com</text>
      <text x="655" y="376" fontSize="16" transform="rotate(-7 655 376)">bbenton@cad-a-blog.com</text>
      <text x="667" y="393" fontSize="16" transform="rotate(-7 667 393)">twitter.com/bobenton</text>
      <text x="677" y="410" fontSize="16" transform="rotate(-7 677 410)">facebook.com/cadablog</text>
    </g>

    <g strokeLinecap="square">
      <path d="M62 629L46 611" stroke="#43a848" strokeWidth="4.500" />
      <path d="M62 630L106 625" stroke="#cc5058" strokeWidth="5" />
      <path d="M60.500 630V588" stroke="#4f80d0" strokeWidth="4.500" />
      <path d="M58 572H70L59 583H71" stroke="#3f74dc" fill="none" />
      <path d="M44 595L49.500 600L54 595M49.500 600V605" stroke="#4db34d" fill="none" />
      <path d="M104 609L114 619M114 609L104 619" stroke="#cc3d46" />
    </g>
  </Scene>
);

const Cube = styled.svg`
  position: absolute;
  right: 8px;
  top: 53px;
`;

const ViewCube = () => (
  <Cube width="102" height="78" viewBox="1160 230 102 78" aria-label="View cube">
    <ellipse cx="1211" cy="281" rx="39" ry="18" fill="none" stroke="#434851" strokeWidth="9" />
    <path d="M1191 240L1221 236L1232 248L1199 252Z" fill="#c9cacd" />
    <path d="M1199 252L1232 248V278L1200 283Z" fill="#b5b6ba" />
    <path d="M1191 240L1199 252L1200 283L1192 270Z" fill="#9fa1a7" />
    <path d="M1191 240L1199 252L1232 248M1199 252L1200 283" stroke="#44474e" strokeDasharray="4 2" fill="none" />
    <path d="M1160 268.700L1262 256" stroke="#f0788a" opacity=".75" />
    <g fontFamily='"Liberation Sans", sans-serif' fontWeight="700" textAnchor="middle">
      <text x="1215.500" y="270" fontSize="8" fill="#303339" transform="rotate(-5 1215 268)">FRONT</text>
      <text x="1211" y="246" fontSize="6" fill="#303339" transform="rotate(175 1211 244)">TOP</text>
      <g fontSize="11" fill="#c3c4c9" fontFamily='"DejaVu Sans", sans-serif'>
        <text x="1169" y="286">W</text>
        <text x="1249" y="275">E</text>
        <text x="1225" y="304">S</text>
      </g>
    </g>
  </Cube>
);

const n = '#41454e';
const NavIcons = () => (
  <NavBar>
    <IconButton aria-label="Steering wheel" $h={28}><Glyph s={24}><rect x="2" y="3" width="17" height="16" rx="4" stroke={n} strokeWidth="1.500" /><circle cx="11" cy="11" r="4.500" stroke={n} strokeWidth="1.300" /><path d="M13 16.500H17V22H13M15 19.500H13M19 16.500V22C25 22 25 16.500 19 16.500Z" stroke={n} /></Glyph></IconButton>
    <Arrow w={4} c={n} />
    <IconButton aria-label="Pan" $h={36}><Glyph s={24}><path d="M8 22C6 18 3 16 2 13C4 12 6 14 7 15L6 6C8 5 8.500 7 9 11L10 3C12 2 12 5 12 10L14 3C16 3 15.500 5 15 11L18 6C20 6.500 19 9 18 12V16C18 18 17 20 16 22Z" stroke={n} strokeWidth="1.200" /></Glyph></IconButton>
    <IconButton aria-label="Zoom" $h={28}><Glyph s={24}><path d="M2 3L14 15M16 2L3 16M2 7V3H6M12 2H16V6M3 12V16H7" stroke={n} strokeWidth="1.500" /><circle cx="17" cy="16" r="5" fill="#585c66" stroke={n} strokeWidth="1.500" /><path d="M20 19L24 23" stroke={n} strokeWidth="2" /></Glyph></IconButton>
    <Arrow w={4} c={n} />
    <IconButton aria-label="Orbit" $h={34}><Glyph s={24}><path d="M10 3H14V21H10Z" stroke={n} strokeWidth="1.300" /><path d="M5 15C1 11 8 8 12 8C20 8 24 12 18 15C15 16 9 16 6 15M9 12L5 15L9 19" stroke={n} strokeWidth="1.300" /></Glyph></IconButton>
    <Arrow w={4} c={n} />
    <IconButton aria-label="Show motion" $h={40}><Glyph s={24}><path d="M1 2H7V8H1ZM9 2H15V8H9ZM17 2H23V8H17ZM1 11H16V23H1Z" stroke={n} strokeWidth="1.200" /><path d="M6 13L12 17L6 21Z" fill={n} /></Glyph></IconButton>
  </NavBar>
);

/* ---------- page ---------- */

const tabs = ['Home', 'Insert', 'Annotate', 'Parametric', 'Visualize', 'View', 'Manage', 'Output', 'Add-ins', 'Autodesk 360', 'Express Tools', 'BIM 360', 'Featured Apps'];

const groups: [string, number][][] = [
  [['grid', 30], ['snap', 19], ['v', 19]],
  [['infer', 26]],
  [['ortho', 24], ['polar', 24], ['v', 14], ['iso', 25], ['v', 15]],
  [['angle', 26], ['osnap', 24], ['v', 15]],
  [['p1', 27], ['p2', 22], ['p3', 25], ['1:1', 20], ['v', 15]],
  [['gear', 24], ['v', 17]],
  [['plus', 26]],
  [['calc', 27]],
  [['ball', 26]],
  [['plot', 23], ['share', 19], ['shapes', 29]],
  [['full', 26], ['menu', 26]],
];

const Tool = ({ icon, label, arrow, w }: { icon: React.ReactNode; label: string; arrow?: boolean; w?: number }) => (
  <Split>
    <IconButton $w={w ?? 20} aria-label={label}>{icon}</IconButton>
    {arrow && <Arrow w={5} />}
  </Split>
);

const PanelFrame = ({ w, title, children }: { w: number; title: string; children: React.ReactNode }) => (
  <Panel $w={w}>
    <PanelBody>{children}</PanelBody>
    <PanelTitle>{title}<Arrow w={8} /></PanelTitle>
  </Panel>
);

export default function App() {
  return (
    <Desktop>
      <Global />
      <Frame>
        <TitleBar>
          <AppButton aria-label="Application menu">
            <svg width="24" height="26" viewBox="0 0 24 26" aria-hidden="true">
              <path d="M12 1L22 25H16L12 21L8 25H1Z" fill="#d62224" />
              <path d="M12 1L22 25H16L12 14Z" fill="#9e1518" />
              <path d="M8 18L12 14L16 18L12 22Z" fill="#b9191c" />
            </svg>
            <Arrow w={7} c="#222" />
          </AppButton>
          <QuickBar>
            <IconButton aria-label="New">{Q.file}</IconButton>
            <IconButton aria-label="Open">{Q.open}</IconButton>
            <IconButton aria-label="Save">{Q.save}</IconButton>
            <IconButton aria-label="Save as">{Q.saveAs}</IconButton>
            <IconButton aria-label="Plot">{Q.print}</IconButton>
            <IconButton aria-label="Undo">{Q.undo}</IconButton>
            <IconButton $w={13} aria-label="Undo list"><Arrow w={5} /></IconButton>
            <IconButton $w={22} aria-label="Redo">{Q.redo}</IconButton>
            <IconButton $w={13} aria-label="Redo list"><Arrow w={5} /></IconButton>
            <IconButton $w={14} aria-label="Customize">{Q.more}</IconButton>
          </QuickBar>
          <Title>Wheel Assembly.dwg</Title>
          <BarStrip>
            <IconButton $w={14} aria-label="Collapse search"><svg width="4" height="8" viewBox="0 0 4 8"><path d="M0 0L4 4L0 8Z" fill="#fff" /></svg></IconButton>
            <SearchBox aria-label="Search" placeholder="Type a keyword or phrase" />
            <IconButton aria-label="Find">{Q.binoc}</IconButton>
            <SignIn>{Q.user}Sign In</SignIn>
            <ArrowSlot><Arrow w={6} c="#ddd" /></ArrowSlot>
            <IconButton $w={26} aria-label="Exchange">{Q.exch}</IconButton>
            <IconButton $w={22} aria-label="Autodesk">{Q.a360}</IconButton>
            <IconButton $w={12} aria-label="Autodesk list"><Arrow w={5} /></IconButton>
            <Rule />
            <IconButton $w={26} aria-label="Help">{Q.help}</IconButton>
            <IconButton $w={12} aria-label="Help list"><Arrow w={5} /></IconButton>
          </BarStrip>
          <WinButtons>
            <IconButton $w={26} aria-label="Minimize"><Glyph s={16}><path d="M4 13H12" stroke="#222" strokeWidth="2" /></Glyph></IconButton>
            <IconButton $w={28} aria-label="Maximize"><Glyph s={16}><path d="M3.500 4V12.500H12.500V4" stroke="#222" /><path d="M3 4.500H13" stroke="#222" strokeWidth="2" /></Glyph></IconButton>
            <CloseButton $w={44} aria-label="Close"><Glyph s={14}><path d="M4 5L10 11M10 5L4 11" stroke="#fff" strokeWidth="1.500" /></Glyph></CloseButton>
          </WinButtons>
        </TitleBar>

        <TabRow>
          {tabs.map(t => <RibbonTab key={t} $on={t === 'Home'}>{t}</RibbonTab>)}
          <IconButton $w={56} $h={18} aria-label="Ribbon display">
            <svg width="25" height="8" viewBox="0 0 25 8"><rect width="13" height="8" rx="2" fill="#e6e6e6" /><path d="M3.500 5.500L6.500 2.500L9.500 5.500Z" fill="#333" /><path d="M18 2.500H24L21 6Z" fill="#eee" /></svg>
          </IconButton>
        </TabRow>

        <Ribbon>
          <PanelFrame w={225} title="Draw">
            <BigTool $w={43}>{D.line}<span>Line</span></BigTool>
            <BigTool $w={45}>{D.pline}<span>Polyline</span></BigTool>
            <BigTool $w={56}>{D.circle}<span>Circle</span><Arrow w={5} /></BigTool>
            <BigTool $w={36}>{D.arc}<span>Arc</span><Arrow w={5} /></BigTool>
            <ToolGrid $cols="45px">
              <Tool icon={D.rect} label="Rectangle" w={28} arrow />
              <Tool icon={D.ellipse} label="Ellipse" w={28} arrow />
              <Tool icon={D.hatch} label="Hatch" w={28} arrow />
            </ToolGrid>
          </PanelFrame>

          <PanelFrame w={134} title="Modify">
            <ToolGrid $cols="29px 29px 41px 30px">
              <Tool icon={D.move} label="Move" w={30} />
              <Tool icon={D.rotate} label="Rotate" w={30} />
              <Tool icon={D.trim} label="Trim" w={28} arrow />
              <Tool icon={D.brush} label="Match" w={30} />
              <Tool icon={D.copy} label="Copy" w={30} />
              <Tool icon={D.mirror} label="Mirror" w={30} />
              <Tool icon={D.fillet} label="Fillet" w={28} arrow />
              <Tool icon={D.erase} label="Explode" w={30} />
              <Tool icon={D.stretch} label="Stretch" w={30} />
              <Tool icon={D.scale} label="Scale" w={30} />
              <Tool icon={D.array} label="Spline" w={28} arrow />
              <Tool icon={D.offset} label="Offset" w={30} />
            </ToolGrid>
          </PanelFrame>

          <PanelFrame w={85} title="Annotation">
            <BigTool $w={46}>{D.text}<span>Text</span><Arrow w={5} /></BigTool>
            <ToolGrid $cols="38px">
              <Tool icon={D.dim} label="Dimension" w={24} arrow />
              <Tool icon={D.leader} label="Leader" w={24} arrow />
              <Tool icon={D.table} label="Table" w={24} />
            </ToolGrid>
          </PanelFrame>

          <PanelFrame w={273} title="Layers">
            <BigTool $w={62}>{D.layerProps}<span>Layer<br />Properties</span></BigTool>
            <LayerArea>
              <LayerCombo>
                {D.bulb}{D.sun}{D.unlock}<Swatch />
                <PlainSelect aria-label="Layer"><option>0</option></PlainSelect>
                <Arrow w={8} />
              </LayerCombo>
              <ToolGrid $cols="repeat(5, 24px)">
                {L.map((ic, i) => <IconButton key={i} aria-label={`Layer tool ${i + 1}`}>{ic}</IconButton>)}
              </ToolGrid>
            </LayerArea>
          </PanelFrame>

          <PanelFrame w={79} title="Block">
            <BigTool $w={42}>{D.insert}<span>Insert</span></BigTool>
            <ToolGrid $cols="36px">
              <Tool icon={D.blockNew} label="Create block" w={22} />
              <Tool icon={D.blockEdit} label="Edit block" w={22} />
              <Tool icon={D.blockAttr} label="Edit attributes" w={22} arrow />
            </ToolGrid>
          </PanelFrame>

          <SmallPanel><ColorWheel /><span>Properties</span><Arrow w={8} /></SmallPanel>
          <SmallPanel><GroupIcon /><span>Groups</span><Arrow w={8} /></SmallPanel>
          <SmallPanel><CalcIcon /><span>Utilities</span><Arrow w={8} /></SmallPanel>
          <SmallPanel><ClipIcon /><span>Clipboard</span><Arrow w={8} /></SmallPanel>
          <SmallPanel><ViewIcon /><span>View</span><Arrow w={8} /></SmallPanel>
        </Ribbon>

        <FileStrip>
          <FileTab>Wheel Assembly*<Glyph s={9}><path d="M1 1L8 8M8 1L1 8" stroke="#444" strokeWidth="1.600" /></Glyph></FileTab>
          <AddTab aria-label="New drawing"><Glyph s={7}><path d="M3.500 0V7M0 3.500H7" stroke="#ddd" strokeWidth="1.600" /></Glyph></AddTab>
        </FileStrip>

        <Canvas>
          <SceneDrawing />
          <ViewLabels><button>[−]</button><button>[Custom View]</button><button>[Conceptual]</button></ViewLabels>
          <DocButtons>
            <IconButton $w={20} $h={16} aria-label="Minimize drawing"><Glyph s={12}><path d="M1 8.500H11" stroke="#ddd" strokeWidth="2.500" /></Glyph></IconButton>
            <IconButton $w={20} $h={16} aria-label="Restore drawing"><Glyph s={12}><path d="M4 3V1.500H10.500V8H9" stroke="#ddd" strokeWidth="1.300" /><rect x="2" y="4" width="6" height="6" stroke="#eee" strokeWidth="2" /></Glyph></IconButton>
            <IconButton $w={20} $h={16} aria-label="Close drawing"><Glyph s={12}><path d="M2 2L10 10M10 2L2 10" stroke="#eee" strokeWidth="2.400" /></Glyph></IconButton>
          </DocButtons>
          <ViewCube />
          <UcsSelect aria-label="Coordinate system"><option>Unnamed</option></UcsSelect>
          <UcsDash />
          <NavIcons />
          <CommandArea>
            <History $dim>Command: _vscurrent</History>
            <History>{'Enter an option [2dwireframe/Wireframe/Hidden/Realistic/Conceptual/Shaded/shaded with Edges/shades of Gray/\nSKetchy/X-ray/Other] <2dwireframe>: _c'}</History>
            <CommandBar>
              <CommandGrip>
                <Glyph s={6}><path d="M1 0V6M4 0V6" stroke="#999" strokeDasharray="1 1" /></Glyph>
                <IconButton $w={22} aria-label="Close command line"><Glyph s={10}><path d="M1 1L9 9M9 1L1 9" stroke="#ececec" strokeWidth="1.700" /></Glyph></IconButton>
                <IconButton $w={22} aria-label="Customize command line"><Glyph s={16}><path d="M7 7L14 14" stroke="#e4e4e4" strokeWidth="3" strokeLinecap="round" /><path d="M2 4.500C2 8 6 9.500 8.500 7S7.500 1.500 4.500 2L6 4.500L4.500 6Z" fill="#e4e4e4" /></Glyph></IconButton>
              </CommandGrip>
              <CommandField>
                <Glyph s={14}><rect x=".5" y="1.500" width="13" height="11" fill="#a9abb1" stroke="#71747b" /><path d="M3 4.500L6 7L3 9.500M7 10H11" stroke="#333" strokeWidth="1.200" /></Glyph>
                <IconButton $w={12} aria-label="Recent commands"><Arrow w={6} c="#555" /></IconButton>
                <CommandInput aria-label="Command" placeholder="Type a command" />
                <svg width="7" height="4" viewBox="0 0 8 4" preserveAspectRatio="none"><path d="M0 4H8L4 0Z" fill="#222" /></svg>
              </CommandField>
            </CommandBar>
          </CommandArea>
        </Canvas>

        <Bottom>
          <LayoutTab $w={65} $on>Model</LayoutTab>
          <LayoutTab $w={64}>Layout1</LayoutTab>
          <LayoutTab $w={28} aria-label="New layout">+</LayoutTab>
          <Status>
            <Coords>-53.5889, 14.7940, 0.0000</Coords>
            <StatusGroup><IconButton $w={50}>MODEL</IconButton></StatusGroup>
            {groups.map((g, i) => (
              <StatusGroup key={i}>
                {g.map(([k, w], j) => (
                  <IconButton key={j} $w={w} aria-label={k === 'v' ? 'More options' : k}>
                    {k === 'v' ? <Arrow w={7} /> : S[k] ?? k}
                  </IconButton>
                ))}
              </StatusGroup>
            ))}
          </Status>
        </Bottom>
      </Frame>
      <Behind><Fringe $w={60} /><Fringe $w={128} /></Behind>
      <Watermark>InfiniteSkills.com</Watermark>
    </Desktop>
  );
}
